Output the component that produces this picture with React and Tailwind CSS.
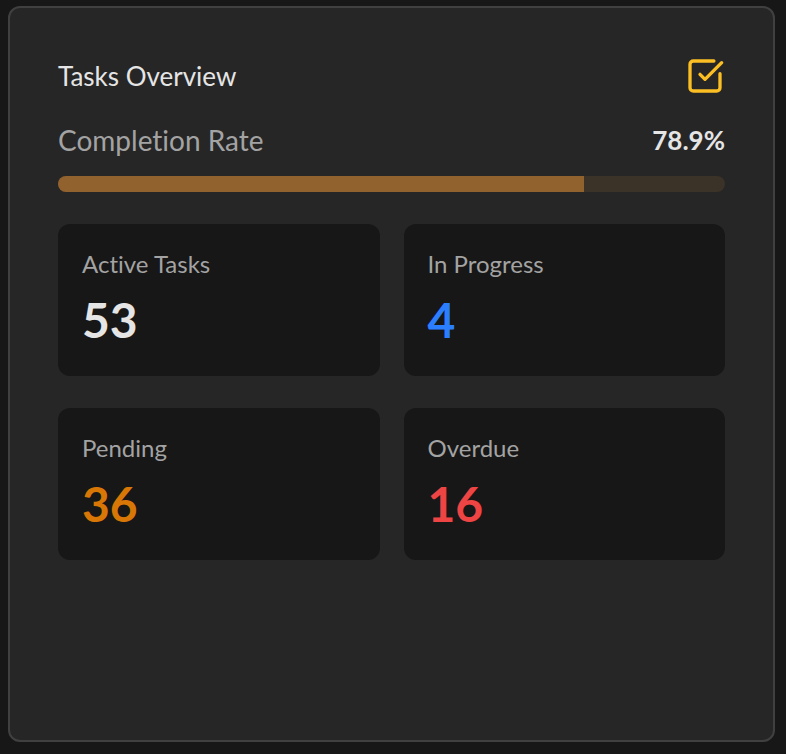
import React from 'react';
import { SquareCheckBig } from 'lucide-react';

const completionRate = 78.9;

const stats = [
    { label: 'Active Tasks', value: 53, color: 'text-[#e5e5e5]' },
    { label: 'In Progress', value: 4, color: 'text-[#2b7fff]' },
    { label: 'Pending', value: 36, color: 'text-[#d97706]' },
    { label: 'Overdue', value: 16, color: 'text-[#ef4444]' }
];

const StatCard = ({ label, value, color }) => (
    <div className="rounded-xl bg-[#171717] p-6">
        <dt className="text-2xl leading-8 text-[#a3a3a3]">{label}</dt>
        <dd className={`mt-2 text-5xl leading-16 font-bold ${color}`}>{value}</dd>
    </div>
);

const TasksOverview = () => (
    <section className="flex-1 rounded-xl border-2 border-[#404040] bg-[#262626] p-12">
        <div className="flex items-center justify-between">
            <h2 className="text-[26px] leading-10 text-[#e5e5e5]">Tasks Overview</h2>
            <SquareCheckBig className="h-10 w-10 text-[#fbbf24]" />
        </div>

        {/* Completion rate */}
        <div className="mt-6 flex items-center justify-between">
            <span id="completion-label" className="text-[28px] leading-10 text-[#a3a3a3]">Completion Rate</span>
            <span className="text-[26px] leading-10 font-bold text-[#e5e5e5]">{completionRate}%</span>
        </div>
        <div
            role="progressbar"
            aria-labelledby="completion-label"
            aria-valuenow={completionRate}
            aria-valuemin={0}
            aria-valuemax={100}
            className="mt-4 h-4 overflow-hidden rounded-full bg-[#3b3228]"
        >
            <div className="h-full bg-[#92622e]" style={{ width: `${completionRate}%` }}></div>
        </div>

        <dl className="mt-8 grid grid-cols-2 gap-x-6 gap-y-8">
            {stats.map((stat) => (
                <StatCard key={stat.label} {...stat} />
            ))}
        </dl>
    </section>
);

function App() {
    return (
        <main className="flex min-h-screen flex-col bg-[#171717] pt-1.5 pr-[11px] pb-3 pl-2 font-['Lato',sans-serif] [font-variant-ligatures:none]">
            <TasksOverview />
        </main>
    );
}

export default App;
